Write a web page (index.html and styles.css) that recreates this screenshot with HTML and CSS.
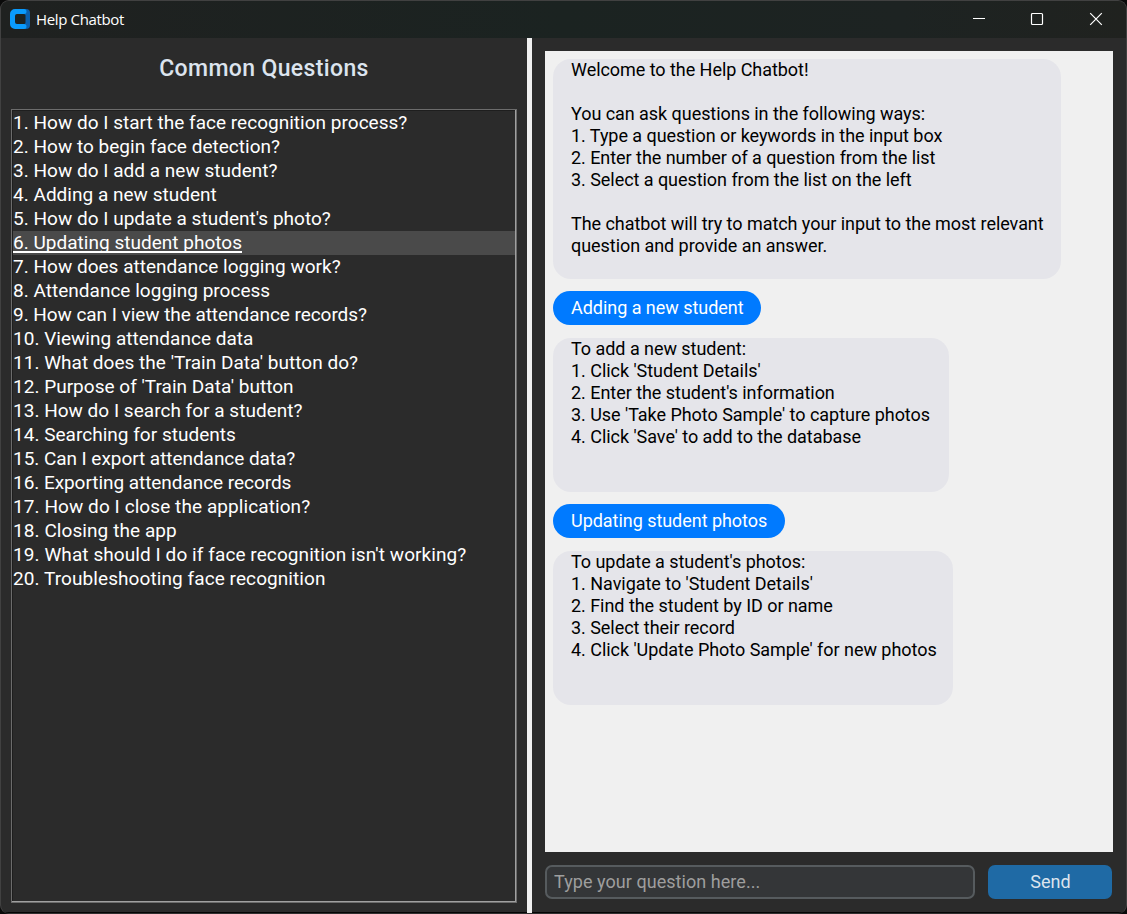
FILE: index.html
```html
<!DOCTYPE html>
<html lang="en">
<head>
<meta charset="utf-8">
<title>Help Chatbot</title>
<link rel="stylesheet" href="styles.css">
</head>
<body>
<div class="window">
  <header class="titlebar">
    <svg class="logo" width="20" height="20" viewBox="0 0 20 20">
      <path fill="#0a5fae" d="M13 0h3a4 4 0 0 1 4 4v12a4 4 0 0 1-4 4h-3z"/>
      <path fill="#1d2322" d="M7 5h7a1.500 1.500 0 0 1 1.500 1.500v7a1.500 1.500 0 0 1-1.500 1.500H7a2 2 0 0 1-2-2V7a2 2 0 0 1 2-2z"/>
      <path fill="#0a9bfd" d="M5 0h9a2.500 2.500 0 0 1 0 5H7a2 2 0 0 0-2 2v6a2 2 0 0 0 2 2h7a2.500 2.500 0 0 1 0 5H5a5 5 0 0 1-5-5V5a5 5 0 0 1 5-5z"/>
    </svg>
    <span class="caption">Help Chatbot</span>
    <svg class="controls" width="132" height="14" viewBox="0 0 132 14">
      <path d="M0 6.500h12" stroke="#fff"/>
      <rect x="58.500" y="1.500" width="11" height="11" rx="1" fill="none" stroke="#fff" stroke-width="1.200"/>
      <path d="M117.200 1.200l11.600 11.600M128.800 1.200l-11.600 11.600" stroke="#fff" stroke-width="1.200"/>
    </svg>
  </header>
  <main class="panes">
    <section class="left">
      <h1 class="heading">Common Questions</h1>
      <ul class="list">
        <li><span>1. How do I start the face recognition process?</span></li>
        <li><span>2. How to begin face detection?</span></li>
        <li><span>3. How do I add a new student?</span></li>
        <li><span>4. Adding a new student</span></li>
        <li><span>5. How do I update a student's photo?</span></li>
        <li class="selected"><span>6. Updating student photos</span></li>
        <li><span>7. How does attendance logging work?</span></li>
        <li><span>8. Attendance logging process</span></li>
        <li class="tight"><span>9. How can I view the attendance records?</span></li>
        <li><span>10. Viewing attendance data</span></li>
        <li><span>11. What does the 'Train Data' button do?</span></li>
        <li><span>12. Purpose of 'Train Data' button</span></li>
        <li><span>13. How do I search for a student?</span></li>
        <li><span>14. Searching for students</span></li>
        <li class="tight"><span>15. Can I export attendance data?</span></li>
        <li class="tight"><span>16. Exporting attendance records</span></li>
        <li class="loose"><span>17. How do I close the application?</span></li>
        <li class="loose"><span>18. Closing the app</span></li>
        <li class="loose"><span>19. What should I do if face recognition isn't working?</span></li>
        <li class="loose"><span>20. Troubleshooting face recognition</span></li>
      </ul>
    </section>
    <div class="sash"></div>
    <section class="right">
      <div class="chat">
        <div class="bubble bot welcome">Welcome to the Help Chatbot!

You can ask questions in the following ways:
1. Type a question or keywords in the input box
2. Enter the number of a question from the list
3. Select a question from the list on the left

The chatbot will try to match your input to the most relevant
question and provide an answer.</div>
        <div class="bubble user add">Adding a new student</div>
        <div class="bubble bot add-answer">To add a new student:
1. Click 'Student Details'
2. Enter the student's information
3. Use 'Take Photo Sample' to capture photos
4. Click 'Save' to add to the database</div>
        <div class="bubble user update">Updating student photos</div>
        <div class="bubble bot update-answer">To update a student's photos:
1. Navigate to 'Student Details'
2. Find the student by ID or name
3. Select their record
4. Click 'Update Photo Sample' for new photos</div>
      </div>
      <div class="composer">
        <input class="entry" type="text" placeholder="Type your question here...">
        <button class="send">Send</button>
      </div>
    </section>
  </main>
</div>
</body>
</html>
```
FILE: styles.css
```css
* { box-sizing: border-box; }
body {
  margin: 0;
  height: 914px;
  background: #0a0a0a;
  font-family: Roboto, "Liberation Sans", sans-serif;
  overflow: hidden;
}
.window {
  height: 914px;
  display: flex;
  flex-direction: column;
  border: 1px solid #414141;
  border-bottom-color: #303030;
  border-radius: 9px;
  background: #2b2b2b;
  overflow: hidden;
}
.titlebar {
  height: 37px;
  flex: none;
  display: flex;
  align-items: center;
  padding: 0 21px 2px 9px;
  background: linear-gradient(90deg, #1f2120, #1b2321 50%, #1d2322 80%, #20221f);
}
.caption {
  margin-left: 6px;
  color: #fff;
  font: 15px/20px "Open Sans", sans-serif;
  letter-spacing: -0.35px;
  flex: 1;
}
.panes { flex: 1; display: flex; min-height: 0; }
.left,
.right { border-bottom: 1px solid #050505; display: flex; flex-direction: column; }
.left { width: 526px; padding: 0 10px 9px; }
.heading {
  margin: 0;
  height: 71px;
  padding-top: 16px;
  text-align: center;
  color: #dce4ee;
  font-size: 23px;
  line-height: 30px;
  font-weight: 500;
  letter-spacing: 0.37px;
}
.list {
  flex: 1;
  margin: 0;
  padding: 1px;
  list-style: none;
  border: 1px solid #6c6c6c;
  box-shadow: inset -1px -1px #a0a0a0, inset 1px 1px #1e1e1e;
  color: #fff;
  font-size: 19px;
  letter-spacing: 0.02px;
}
.list li { height: 24px; line-height: 24px; white-space: nowrap; }
.list .tight { letter-spacing: -0.05px; }
.list .loose { letter-spacing: 0.08px; }
.list .selected { background: #4a4a4a; }
.selected span { display: inline-block; height: 22px; border-bottom: 2px solid #fff; }
.sash { width: 5px; background: #f0f0f0; }
.right { flex: 1; padding: 13px; gap: 13px; }
.chat {
  flex: 1;
  padding: 8px;
  display: flex;
  flex-direction: column;
  align-items: flex-start;
  background: #f0f0f0;
}
.bubble { font-size: 18px; line-height: 22px; padding-left: 18px; white-space: pre; letter-spacing: -0.04px; }
.bot { background: #e5e5ea; color: #000; border-radius: 18px; margin-bottom: 12px; }
.user { height: 34px; line-height: 34px; border-radius: 17px; background: #007aff; color: #fff; margin-bottom: 13px; }
.welcome { width: 508px; height: 220px; letter-spacing: -0.05px; }
.add { width: 208px; }
.add-answer { width: 396px; height: 154px; }
.update { width: 232px; }
.update-answer { width: 400px; height: 154px; }
.composer { display: flex; gap: 13px; height: 34px; }
.entry {
  width: 430px;
  padding: 0 7px 2px;
  border: 2px solid #565b5e;
  border-radius: 7px;
  background: #343638;
  color: #dce4ee;
  font: 18px Roboto, sans-serif;
  letter-spacing: 0.05px;
}
.entry::placeholder { color: #9e9e9e; opacity: 1; }
.send {
  width: 124px;
  padding: 0 0 2px 1px;
  border: 0;
  border-radius: 7px;
  background: #1f6aa5;
  color: #dce4ee;
  font: 18px Roboto, sans-serif;
}
```
